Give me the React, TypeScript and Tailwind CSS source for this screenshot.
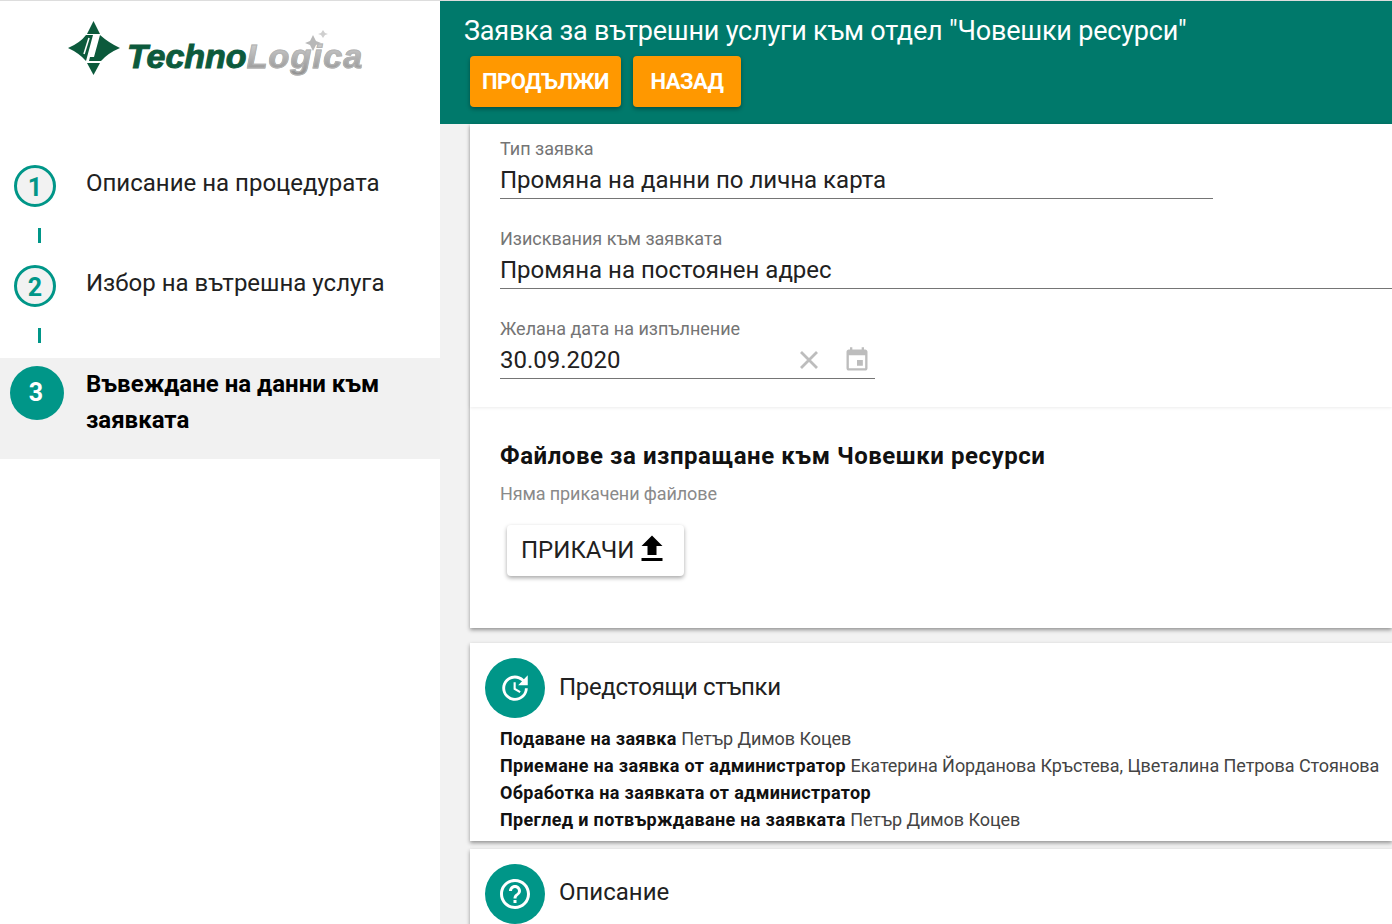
const steps = [
  { n: 1, label: "Описание на процедурата" },
  { n: 2, label: "Избор на вътрешна услуга" },
];

const upcoming = [
  { title: "Подаване на заявка", people: "Петър Димов Коцев" },
  {
    title: "Приемане на заявка от администратор",
    people: "Екатерина Йорданова Кръстева, Цветалина Петрова Стоянова",
  },
  { title: "Обработка на заявката от администратор", people: "" },
  { title: "Преглед и потвърждаване на заявката", people: "Петър Димов Коцев" },
];

function Logo() {
  return (
    <div className="flex h-[120px] items-start pl-[67px] pt-[20px]">
      <svg width="53" height="54" viewBox="0 0 53 54" className="shrink-0">
        <path d="M26.5 0 L33 13 H20 Z" fill="#0c5a3c" />
        <path d="M26.5 54 L20 42 H33 Z" fill="#0c5a3c" />
        <path d="M1 27 Q13 22 19 14 H26 L19 40 Q12 32 1 27 Z" fill="#0c5a3c" />
        <path d="M53 27 Q41 32 34 40 H22 L23 36 H27 L33 14 Q42 22 53 27 Z" fill="#0c5a3c" />
        <path d="M22 17 L17 33" stroke="white" strokeWidth="1.6" />
      </svg>
      <div className="relative ml-[7px] mt-[15px] flex font-['Liberation_Sans',sans-serif] text-[34px] font-bold italic leading-[40px]">
        <span className="text-[#0c5a3c] [-webkit-text-stroke:1px_#0c5a3c]">Techno</span>
        <span className="bg-gradient-to-b from-[#dcdcdc] to-[#8f8f8f] bg-clip-text tracking-[1.2px] text-transparent [-webkit-text-stroke:1px_#b4b4b4]">Logica</span>
        <svg width="26" height="22" viewBox="0 0 26 22" className="absolute left-[177px] top-[-6px]">
          <path d="M9 5 L12 11 L17 13 L12 15 L9 21 L6 15 L1 13 L6 11 Z" fill="#b8b8b8" />
          <path d="M19 0 L21 3 L24 4 L21 5 L19 8 L17 5 L14 4 L17 3 Z" fill="#cfcfcf" />
        </svg>
      </div>
    </div>
  );
}

function Field({ label, value, width, gap }: { label: string; value: string; width: string; gap: string }) {
  return (
    <div className={`${width} ${gap} border-b border-[#757575]`}>
      <div className="h-[20px] text-[18px] leading-[20px] text-[#757575]">{label}</div>
      <div className="h-[39px] pt-[3px] text-[24px] leading-[36px] text-[#212121]">{value}</div>
    </div>
  );
}

function RoundIcon({ children }: { children: React.ReactNode }) {
  return (
    <div className="flex h-[60px] w-[60px] shrink-0 items-center justify-center rounded-full bg-[#009688] text-white">
      {children}
    </div>
  );
}

export default function App() {
  return (
    <div className="flex h-[924px] w-[1392px] overflow-hidden border-t border-[#dddddd] bg-white font-['Roboto',sans-serif]">
      <aside className="w-[440px] shrink-0 bg-white">
        <Logo />
        <div className="pt-[44px]">
          {steps.map((s) => (
            <div key={s.n} className="h-[100px]">
              <div className="flex h-[63px] pl-[14px]">
                <div className="flex h-[42px] w-[42px] items-center justify-center rounded-full border-[3px] border-[#009688] bg-[#f2f2f2] pt-[4px] text-[25px] font-bold text-[#009688]">
                  {s.n}
                </div>
                <div className="pl-[30px] text-[24px] leading-[36px] text-[#212121]">{s.label}</div>
              </div>
              <div className="ml-[38px] h-[15px] w-[3px] bg-[#009688]" />
            </div>
          ))}
          <div className="-mt-[7px] flex h-[101px] bg-[#f1f1f1] pl-[10px] pt-[8px]">
            <div className="flex h-[54px] w-[54px] items-center justify-center rounded-full bg-[#009688] pr-[2px] text-[25px] font-bold text-white">
              3
            </div>
            <div className="w-[320px] pl-[22px] text-[24px] font-bold leading-[36px] text-black">
              Въвеждане на данни към заявката
            </div>
          </div>
        </div>
      </aside>
      <main className="min-w-0 flex-1 bg-[#f2f2f2]">
        <header className="h-[123px] bg-[#00796b] pl-[24px] pt-[12px]">
          <h1 className="text-[27px] font-normal leading-[36px] tracking-[-0.2px] text-white">
            Заявка за вътрешни услуги към отдел "Човешки ресурси"
          </h1>
          <div className="flex gap-[12px] pl-[6px] pt-[7px]">
            <button className="h-[51px] w-[151px] rounded-[4px] bg-[#ff9800] text-[22px] font-bold tracking-[-0.5px] text-white shadow-[0_2px_4px_rgba(0,0,0,0.35)]">
              ПРОДЪЛЖИ
            </button>
            <button className="h-[51px] w-[108px] rounded-[4px] bg-[#ff9800] text-[22px] font-bold tracking-[-0.5px] text-white shadow-[0_2px_4px_rgba(0,0,0,0.35)]">
              НАЗАД
            </button>
          </div>
        </header>
        <div className="pl-[30px]">
          <section className="h-[504px] bg-white shadow-[0_2px_4px_rgba(0,0,0,0.4)]">
            <div className="h-[283px] pl-[30px] pt-[15px] shadow-[0_1px_3px_rgba(0,0,0,0.08)]">
              <Field label="Тип заявка" value="Промяна на данни по лична карта" width="w-[713px]" gap="mb-[30px]" />
              <Field label="Изисквания към заявката" value="Промяна на постоянен адрес" width="w-[900px]" gap="mb-[30px]" />
              <div className="flex h-[60px] w-[375px] flex-col border-b border-[#757575]">
                <div className="h-[20px] text-[18px] leading-[20px] text-[#757575]">Желана дата на изпълнение</div>
                <div className="flex h-[39px] items-center pt-[2px]">
                  <div className="flex-1 text-[24px] leading-[36px] text-[#212121]">30.09.2020</div>
                  <svg width="24" height="24" viewBox="0 0 24 24" className="mr-[22px]">
                    <path d="M4 4 L20 20 M20 4 L4 20" stroke="#bdbdbd" strokeWidth="2.8" />
                  </svg>
                  <svg width="28" height="28" viewBox="0 0 24 24" className="mr-[4px]" fill="#bdbdbd">
                    <path d="M17 12h-5v5h5v-5zM16 1v2H8V1H6v2H5c-1.11 0-1.99.9-1.99 2L3 19c0 1.1.89 2 2 2h14c1.1 0 2-.9 2-2V5c0-1.1-.9-2-2-2h-1V1h-2zm3 18H5V8h14v11z" />
                  </svg>
                </div>
              </div>
            </div>
            <div className="pl-[30px] pt-[33px]">
              <h2 className="text-[24px] font-bold leading-[32px] tracking-[0.55px] text-[#111111]">
                Файлове за изпращане към Човешки ресурси
              </h2>
              <p className="pt-[10px] text-[18px] leading-[24px] tracking-[-0.1px] text-[#8a8a8a]">Няма прикачени файлове</p>
              <button className="ml-[7px] mt-[19px] flex h-[51px] w-[177px] items-center rounded-[4px] bg-white pb-[2px] pl-[14px] text-[24px] text-[#212121] shadow-[0_2px_4px_rgba(0,0,0,0.35)]">
                ПРИКАЧИ
                <svg width="36" height="36" viewBox="0 0 24 24" fill="black" className="mt-[-2px]">
                  <path d="M9 16h6v-6h4l-7-7-7 7h4zm-4 2h14v2H5z" />
                </svg>
              </button>
            </div>
          </section>
          <section className="mt-[15px] h-[198px] bg-white pl-[15px] pt-[15px] shadow-[0_2px_4px_rgba(0,0,0,0.4)]">
            <div className="flex items-center">
              <RoundIcon>
                <svg width="34" height="34" viewBox="0 0 24 24" fill="white">
                  <path d="M21 10.12h-6.78l2.74-2.82c-2.73-2.7-7.15-2.8-9.88-.1-2.73 2.71-2.73 7.08 0 9.79s7.15 2.71 9.88 0C18.32 15.65 19 14.08 19 12.1h2c0 1.98-.88 4.55-2.64 6.29-3.51 3.48-9.21 3.48-12.72 0-3.5-3.47-3.53-9.11-.02-12.58s9.14-3.47 12.65 0L21 3v7.12zM12.5 8v4.25l3.5 2.08-.72 1.21L11 13V8h1.5z" />
                </svg>
              </RoundIcon>
              <div className="pb-[2px] pl-[14px] text-[24px] tracking-[-0.35px] text-[#212121]">Предстоящи стъпки</div>
            </div>
            <div className="pl-[15px] pt-[7px] text-[18px] leading-[27px] tracking-[-0.06px] text-[#444444]">
              {upcoming.map((u) => (
                <div key={u.title} className="whitespace-nowrap">
                  <b className="font-bold tracking-[0.34px] text-[#111111]">{u.title}</b> {u.people}
                </div>
              ))}
            </div>
          </section>
          <section className="mt-[8px] h-[100px] bg-white pl-[15px] pt-[15px] shadow-[0_2px_4px_rgba(0,0,0,0.4)]">
            <div className="flex items-center">
              <RoundIcon>
                <svg width="36" height="36" viewBox="0 0 24 24" fill="white">
                  <path d="M11 18h2v-2h-2v2zm1-16C6.48 2 2 6.48 2 12s4.48 10 10 10 10-4.48 10-10S17.52 2 12 2zm0 18c-4.41 0-8-3.59-8-8s3.59-8 8-8 8 3.59 8 8-3.59 8-8 8zm0-14c-2.21 0-4 1.79-4 4h2c0-1.1.9-2 2-2s2 .9 2 2c0 2-3 1.75-3 5h2c0-2.25 3-2.5 3-5 0-2.21-1.79-4-4-4z" />
                </svg>
              </RoundIcon>
              <div className="pb-[4px] pl-[14px] text-[24px] text-[#212121]">Описание</div>
            </div>
          </section>
        </div>
      </main>
    </div>
  );
}
